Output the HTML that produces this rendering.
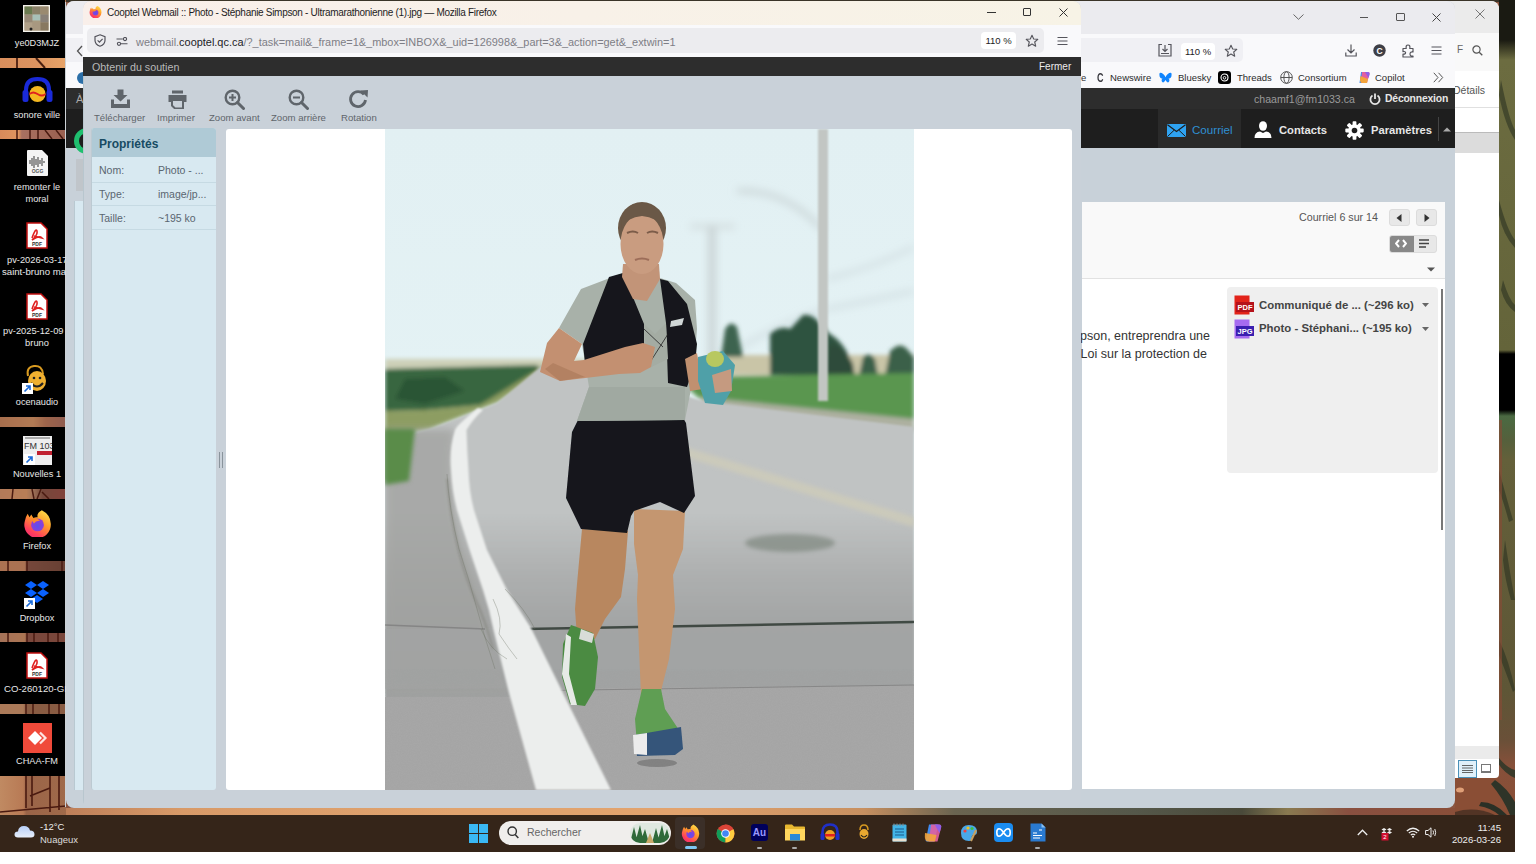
<!DOCTYPE html>
<html><head><meta charset="utf-8">
<style>
*{box-sizing:border-box}
html,body{margin:0;padding:0}
body{width:1536px;height:864px;background:#fff;position:relative;overflow:hidden;font-family:"Liberation Sans",sans-serif}
.a{position:absolute}
#screen{position:absolute;left:0;top:0;width:1515px;height:852px;overflow:hidden;background:#8a5540}
.tile{position:absolute;left:0;width:65px;background:#000}
.dl{position:absolute;left:0;width:74px;text-align:center;color:#e8e8e8;font-size:10px;line-height:12px;white-space:nowrap;overflow:hidden}
.t{position:absolute;white-space:nowrap}
.st{filter:brightness(0.88) saturate(0.9)}
</style></head><body>
<div id="screen">
  <!-- wallpaper -->
  <div class="a" style="left:0;top:0;width:1515px;height:2px;background:#3a3428"></div>
  <div class="a" style="left:0;top:808px;width:1515px;height:7px;background:linear-gradient(90deg,#b07050 0,#d89a68 12%,#e0a36e 30%,#e2a36e 45%,#c89060 57%,#6a6450 63%,#55584a 75%,#4a4a3a 82%,#8a7a50 85%,#8a5040 89%,#8a4e35 100%)"></div>
  <div class="a" style="left:0;top:0;width:66px;height:815px;background:#b07a52"></div>
  <div class="a" style="left:1499px;top:0;width:16px;height:815px;background:linear-gradient(180deg,#1a1a12 0,#1a1a12 40px,#6c6c40 60px,#64643a 350px,#000 354px,#000 410px,#4a6a42 416px,#55603c 440px,#64603a 460px,#5e5636 690px,#6a5038 740px,#86503a 765px,#8a4e35 815px)"></div>
  <svg class="a" style="left:1499px;top:0" width="16" height="815" viewBox="0 0 16 815"><path d="M2 80 Q10 120 16 130 L16 140 Q6 125 0 95Z M0 200 Q8 230 16 240 L16 248 Q4 235 0 215Z M4 280 Q10 300 16 305 L16 312 Q6 305 2 290Z M0 470 Q8 500 14 520 L10 522 Q4 500 0 490Z M6 540 Q12 580 16 600 L12 600 Q6 580 4 560Z M0 640 Q10 660 16 690 L14 692 Q6 670 0 655Z" fill="#2c3222" opacity="0.6"/><rect x="0" y="420" width="3" height="300" fill="#8a4a35" opacity="0.6"/></svg>
  <div class="a" style="left:1455px;top:770px;width:44px;height:45px;background:#8a4e35"></div>
  <svg class="a" style="left:1455px;top:740px" width="60" height="75" viewBox="0 0 60 75"><path d="M40 40 Q52 48 60 62 L60 75 L55 75 Q48 58 36 44 Z" fill="#2e3428"/><path d="M26 62 Q40 62 52 75 L44 75 Q36 68 24 66 Z" fill="#2a3026"/><path d="M44 18 Q52 28 60 30 L60 38 Q50 34 42 22 Z" fill="#3a3a2a"/><ellipse cx="5" cy="50" rx="4" ry="2.5" fill="#e0a078"/><path d="M0 72 Q20 66 40 75 L0 75Z" fill="#3a2a20" opacity="0.7"/></svg>
  <!-- desktop tiles -->
  <div class="a" style="left:0;top:58px;width:66px;height:10px;background:linear-gradient(90deg,#d98e5c 0,#dc9460 55%,#e8a468 100%)"></div>
  <div class="a" style="left:16px;top:58px;width:2px;height:10px;background:#5a2a18"></div>
  <svg class="a" style="left:0;top:58px" width="66" height="10"><path d="M36 0L45 10" stroke="#4a2010" stroke-width="2"/></svg>
  <div class="a" style="left:0;top:130px;width:66px;height:9px;background:linear-gradient(90deg,#d88a5a 0,#e0955f 28%,#a87060 33%,#9a6050 100%)"></div>
  <svg class="a" style="left:0;top:130px" width="66" height="9"><path d="M17 0V9M30 0V9M38 0V9M45 0L52 9M56 0L63 9" stroke="#4a1a10" stroke-width="1.5"/></svg>
  <div class="a st" style="left:0;top:417px;width:66px;height:10px;background:linear-gradient(90deg,#c47c52 0,#d08a5a 50%,#b87050 70%,#a86858 100%)"></div>
  <div class="a st" style="left:0;top:489px;width:66px;height:10px;background:linear-gradient(90deg,#d08a60 0,#d88e5c 40%,#b88060 50%,#8a5040 65%,#9a4a40 100%)"></div>
  <svg class="a" style="left:0;top:489px" width="66" height="10"><path d="M13 0L12 10M32 0L34 10M41 0L37 10M42 3L49 10" stroke="#4a1a10" stroke-width="1.5"/></svg>
  <div class="a st" style="left:0;top:561px;width:66px;height:10px;background:linear-gradient(90deg,#c88058 0,#c88058 37%,#8a5040 42%,#7a4838 100%)"></div>
  <svg class="a" style="left:0;top:561px" width="66" height="10"><path d="M8 0V10M27 0V10M62 0V10" stroke="#4a1a10" stroke-width="1.5"/></svg>
  <div class="a st" style="left:0;top:633px;width:66px;height:9px;background:linear-gradient(90deg,#c08060 0,#c88458 37%,#905040 42%,#905040 100%)"></div>
  <svg class="a" style="left:0;top:633px" width="66" height="9"><path d="M8 0V9M27 0V9M34 0V9M48 0V9M58 0V9" stroke="#4a1a10" stroke-width="1.5"/></svg>
  <div class="a st" style="left:0;top:704px;width:66px;height:10px;background:linear-gradient(90deg,#c88a60 0,#c88a60 35%,#a06848 40%,#a06848 100%)"></div>
  <svg class="a" style="left:0;top:704px" width="66" height="10"><path d="M26 0V10M33 0V10M49 0V10M59 0V10" stroke="#4a1a10" stroke-width="1.5"/></svg>
  <div class="a" style="left:0;top:776px;width:66px;height:39px;background:linear-gradient(90deg,#c08a62 0,#b87a55 35%,#9a6448 40%,#a06a4a 100%)"></div>
  <svg class="a" style="left:0;top:776px" width="66" height="39"><path d="M26 0V32M32 0V30M50 0V36M59 0V34M30 20L50 12M0 36L66 30" stroke="#4a1a10" stroke-width="1.6" fill="none"/></svg>
  <div class="tile" style="top:0;height:58px"></div>
  <div class="tile" style="top:68px;height:62px"></div>
  <div class="tile" style="top:139px;height:278px"></div>
  <div class="tile" style="top:427px;height:62px"></div>
  <div class="tile" style="top:499px;height:62px"></div>
  <div class="tile" style="top:571px;height:62px"></div>
  <div class="tile" style="top:642px;height:62px"></div>
  <div class="tile" style="top:714px;height:62px"></div>
  <div class="a" style="left:65px;top:2px;width:1px;height:805px;background:#cdd2d6"></div>

  <!-- desktop icons -->
  <svg class="a" style="left:23px;top:5px" width="27" height="27" viewBox="0 0 27 27"><rect width="27" height="27" fill="#f4f2ec"/><rect x="1.5" y="1.5" width="24" height="24" fill="#a89a80"/><rect x="1.5" y="1.5" width="8" height="8" fill="#6a7a50"/><rect x="9.5" y="1.5" width="8" height="8" fill="#8a8068"/><rect x="17.5" y="1.5" width="8" height="8" fill="#9a8a70"/><rect x="1.5" y="9.5" width="8" height="8" fill="#988a78"/><rect x="9.5" y="9.5" width="8" height="6" fill="#a8c0b8"/><rect x="17.5" y="9.5" width="8" height="8" fill="#888078"/><rect x="1.5" y="17.5" width="8" height="8" fill="#b0a088"/><rect x="9.5" y="17.5" width="8" height="8" fill="#a89880"/><rect x="17.5" y="17.5" width="8" height="8" fill="#887860"/><circle cx="8" cy="24" r="1.5" fill="#222"/></svg>
  <div class="dl" style="top:37px;font-size:9.2px">ye0D3MJZ</div>
  <svg class="a" style="left:22px;top:77px" width="31" height="27" viewBox="0 0 31 27"><path d="M4 19V13Q4 2 15.5 2Q27 2 27 13V19" fill="none" stroke="#1a2ad8" stroke-width="4"/><rect x="0.5" y="13" width="6" height="12" rx="2.5" fill="#1a2ad8"/><rect x="24.5" y="13" width="6" height="12" rx="2.5" fill="#1a2ad8"/><ellipse cx="15.5" cy="17" rx="8" ry="8" fill="#f5b820"/><path d="M7.5 16Q11 13 15.5 16Q20 19 23.5 16V18Q20 21 15.5 18Q11 15 7.5 18Z" fill="#e02020"/></svg>
  <div class="dl" style="top:109px;font-size:9.2px">sonore ville</div>
  <svg class="a" style="left:26px;top:149px" width="23" height="28" viewBox="0 0 23 28"><path d="M1 2Q1 1 2 1H16L22 7V26Q22 27 21 27H2Q1 27 1 26Z" fill="#f4f4f4"/><path d="M4 11V15M6 9V17M8 7V19M10 10V16M12 8V18M14 11V15M16 9V17M18 12V14" stroke="#555" stroke-width="1.2"/><text x="11.5" y="24" font-size="5" fill="#555" text-anchor="middle" font-family="Liberation Sans" font-weight="bold">OGG</text></svg>
  <div class="dl" style="top:181px;font-size:9.2px">remonter le<br>moral</div>
<svg class="a" style="left:26px;top:222px" width="22" height="27" viewBox="0 0 22 27"><path d="M1 1H15L21 7V26H1Z" fill="#fff" stroke="#c01010" stroke-width="1.5"/><path d="M6 16Q10 5 11 9Q12 13 6 18Q13 13 16 16Q12 15 8 14" fill="none" stroke="#e02020" stroke-width="1.6"/><text x="11" y="23.5" font-size="5" fill="#333" text-anchor="middle" font-family="Liberation Sans" font-weight="bold">PDF</text></svg>
  <div class="dl" style="top:254px;font-size:9.3px;text-align:left;left:7px;width:70px">pv-2026-03-17</div><div class="dl" style="top:266px;font-size:9.6px;text-align:left;left:2px;width:70px">saint-bruno mars</div>
<svg class="a" style="left:26px;top:293px" width="22" height="27" viewBox="0 0 22 27"><path d="M1 1H15L21 7V26H1Z" fill="#fff" stroke="#c01010" stroke-width="1.5"/><path d="M6 16Q10 5 11 9Q12 13 6 18Q13 13 16 16Q12 15 8 14" fill="none" stroke="#e02020" stroke-width="1.6"/><text x="11" y="23.5" font-size="5" fill="#333" text-anchor="middle" font-family="Liberation Sans" font-weight="bold">PDF</text></svg>
  <div class="dl" style="top:325px;font-size:9.3px;text-align:left;left:3px;width:70px">pv-2025-12-09</div><div class="dl" style="top:337px;font-size:9.3px">bruno</div>
  <svg class="a" style="left:20px;top:364px" width="30" height="30" viewBox="0 0 30 30"><path d="M8 12Q6 3 14 2Q22 1 23 10" fill="none" stroke="#d89a20" stroke-width="2"/><ellipse cx="17" cy="17" rx="9" ry="10" fill="#f0b030"/><path d="M11 19Q17 26 23 19" fill="none" stroke="#222" stroke-width="2"/><circle cx="14" cy="14" r="1.3" fill="#222"/><circle cx="20" cy="14" r="1.3" fill="#222"/><rect x="2" y="19" width="11" height="11" fill="#fff"/><path d="M4.5 27.5L10 22M6 22H10V26" fill="none" stroke="#1a6ad8" stroke-width="1.6"/></svg>
  <div class="dl" style="top:396px;font-size:9.2px">ocenaudio</div>
  <svg class="a" style="left:23px;top:436px" width="29" height="29" viewBox="0 0 29 29"><rect width="29" height="29" fill="#eeeeee"/><rect x="2" y="1" width="25" height="2" fill="#aaa"/><text x="1" y="13" font-size="9" fill="#333" font-family="Liberation Sans">FM 103.3</text><rect x="14" y="15" width="15" height="4" fill="#c02030"/><rect x="1" y="18" width="11" height="11" fill="#fff"/><path d="M3.5 26.5L9 21M5 21H9V25" fill="none" stroke="#1a6ad8" stroke-width="1.6"/></svg>
  <div class="dl" style="top:468px;font-size:9.2px">Nouvelles 1</div>
  <svg class="a" style="left:23px;top:508px" width="29" height="29" viewBox="0 0 28 28"><defs><linearGradient id="ffod" x1="0.8" y1="0" x2="0.2" y2="1"><stop offset="0" stop-color="#ffe04a"/><stop offset="0.4" stop-color="#ff9a2a"/><stop offset="0.8" stop-color="#ff3d5e"/><stop offset="1" stop-color="#f2306e"/></linearGradient><radialGradient id="ffpd" cx="0.5" cy="0.6" r="0.6"><stop offset="0" stop-color="#5b4ff0"/><stop offset="1" stop-color="#9a3ad0"/></radialGradient></defs><path d="M4.5 5.5 L6.3 9 L8 6.3 L10 9.6 Q12 8.6 14.2 9 Q12.8 5 18.2 2.2 Q26.5 6.5 26.8 15 A12.8 12.8 0 1 1 1.8 12.5 Q2.5 8.5 4.5 5.5 Z" fill="url(#ffod)"/><circle cx="14" cy="16.3" r="6.2" fill="url(#ffpd)"/><path d="M7.8 10.5 Q13 8.2 16.5 12.5 Q12.5 12 10.5 15 Q9 12.5 7.8 10.5 Z" fill="#ff8a2a"/></svg>
  <div class="dl" style="top:540px;font-size:9.2px">Firefox</div>
  <svg class="a" style="left:23px;top:580px" width="29" height="29" viewBox="0 0 29 29"><g fill="#0a62ff"><path d="M8 1L14 5L8 9L2 5Z"/><path d="M20 1L26 5L20 9L14 5Z"/><path d="M8 9L14 13L8 17L2 13Z"/><path d="M20 9L26 13L20 17L14 13Z"/><path d="M14 15L20 19L14 23L8 19Z"/></g><rect x="1" y="18" width="11" height="11" fill="#fff"/><path d="M3.5 26.5L9 21M5 21H9V25" fill="none" stroke="#1a6ad8" stroke-width="1.6"/></svg>
  <div class="dl" style="top:612px;font-size:9.2px">Dropbox</div>
<svg class="a" style="left:26px;top:652px" width="22" height="27" viewBox="0 0 22 27"><path d="M1 1H15L21 7V26H1Z" fill="#fff" stroke="#c01010" stroke-width="1.5"/><path d="M6 16Q10 5 11 9Q12 13 6 18Q13 13 16 16Q12 15 8 14" fill="none" stroke="#e02020" stroke-width="1.6"/><text x="11" y="23.5" font-size="5" fill="#333" text-anchor="middle" font-family="Liberation Sans" font-weight="bold">PDF</text></svg>
  <div class="dl" style="top:683px;font-size:9.6px;text-align:left;left:4px;width:70px">CO-260120-GI..</div>
  <div class="a" style="left:23px;top:723px;width:29px;height:30px;background:#f04a3a"></div>
  <svg class="a" style="left:27px;top:730px" width="22" height="16" viewBox="0 0 22 16"><path d="M8 1L15 8L8 15L1 8Z" fill="#fff"/><path d="M13 2.5L18.5 8L13 13.5" fill="none" stroke="#fff" stroke-width="2.2" opacity="0.85"/></svg>
  <div class="dl" style="top:755px;font-size:9.2px">CHAA-FM</div>

  <!-- right background window -->
  <div class="a" style="left:1380px;top:1px;width:119px;height:777px;background:#fff;border-radius:8px 8px 4px 4px;overflow:hidden">
    <div class="a" style="left:0;top:0;width:119px;height:32px;background:#ebebeb"></div>
    <div class="a" style="left:0;top:32px;width:119px;height:38px;background:#f9f9f9"></div>
    <div class="a" style="left:0;top:106px;width:119px;height:1px;background:#e0e0e0"></div>
    <div class="a" style="left:0;top:131px;width:119px;height:21px;background:#dcdcdc;border-top:1px solid #bbb"></div>
    <div class="a" style="left:0;top:745px;width:119px;height:13px;background:#ebebeb"></div>
    <svg class="a" style="left:95px;top:8px" width="10" height="10" viewBox="0 0 10 10"><path d="M0.5 0.5L9.5 9.5M9.5 0.5L0.5 9.5" stroke="#777" stroke-width="1"/></svg>
    <div class="t" style="left:77px;top:43px;font-size:10px;line-height:12px;color:#666">F</div>
    <svg class="a" style="left:92px;top:44px" width="11" height="11" viewBox="0 0 11 11"><circle cx="4.5" cy="4.5" r="3.6" fill="none" stroke="#555" stroke-width="1.2"/><path d="M7.2 7.2L10.3 10.3" stroke="#555" stroke-width="1.3"/></svg>
    <div class="t" style="left:73px;top:83px;font-size:10.5px;line-height:12px;color:#555">Détails</div>
    <div class="a" style="left:78px;top:759px;width:19px;height:18px;background:#e0f0fa;border:1px solid #4a90b8"></div>
    <svg class="a" style="left:82px;top:764px" width="11" height="8" viewBox="0 0 11 8"><path d="M0 0.5H11M0 3H11M0 5.5H11M0 7.5H11" stroke="#555" stroke-width="0.9"/></svg>
    <div class="a" style="left:101px;top:763px;width:10px;height:9px;border:1px solid #777;border-bottom-width:2px"></div>

  </div>
  <!-- main window -->
  <div id="main" class="a" style="left:66px;top:1px;width:1389px;height:807px;background:#c8d1d9;border-radius:8px;overflow:hidden">
    <div class="a" style="left:0;top:0;width:1389px;height:33px;background:#ebebef"></div>
    <div class="a" style="left:0;top:33px;width:1389px;height:54px;background:#f9f9fb"></div>
    <div class="a" style="left:0;top:87px;width:1389px;height:21px;background:#2d2d2d"></div>
    <div class="a" style="left:0;top:108px;width:1389px;height:39px;background:#1e1e1e"></div>
    <div class="a" style="left:1092px;top:108px;width:83px;height:39px;background:#2a2a2a"></div>
    <div class="a" style="left:8px;top:200px;width:9px;height:589px;background:#d8e9f1;border-left:1px solid #b9c9d1"></div>
    <div class="a" style="left:1016px;top:201px;width:363px;height:77px;background:#f9f9f9;border-bottom:1px solid #e2e2e2"></div>
    <div class="a" style="left:1016px;top:278px;width:363px;height:510px;background:#fff"></div>

    <!-- main title bar controls -->
    <svg class="a" style="left:1227px;top:13px" width="11" height="6" viewBox="0 0 11 6"><path d="M0.5 0.5L5.5 5.3L10.5 0.5" fill="none" stroke="#666" stroke-width="1"/></svg>
    <div class="a" style="left:1294px;top:16px;width:8px;height:1px;background:#555"></div>
    <div class="a" style="left:1330px;top:12px;width:9px;height:8px;border:1px solid #555;border-radius:1px"></div>
    <svg class="a" style="left:1366px;top:12px" width="9" height="9" viewBox="0 0 9 9"><path d="M0.5 0.5L8.5 8.5M8.5 0.5L0.5 8.5" stroke="#444" stroke-width="1"/></svg>
    <!-- nav toolbar -->
    <div class="a" style="left:-10px;top:37px;width:1187px;height:24px;background:#f0f0f4;border-radius:5px"></div>
    <svg class="a" style="left:1092px;top:43px" width="14" height="13" viewBox="0 0 14 13"><path d="M1 4V12H13V4" fill="none" stroke="#55555c" stroke-width="1.2"/><path d="M4 0.5H1V4M10 0.5H13V4" fill="none" stroke="#55555c" stroke-width="1.2"/><path d="M7 1V7.5M4.5 5L7 7.5L9.5 5M3 9.5H11" fill="none" stroke="#55555c" stroke-width="1.2"/></svg>
    <div class="a" style="left:1115px;top:42px;width:34px;height:17px;background:#fff;border-radius:4px"></div>
    <div class="t" style="left:1115px;top:44px;width:34px;text-align:center;font-size:9.5px;line-height:13px;color:#222">110 %</div>
    <svg class="a" style="left:1158px;top:43px" width="14" height="14" viewBox="0 0 14 14"><path d="M7 1.2 L8.7 5 L12.8 5.3 L9.7 8 L10.7 12.2 L7 10 L3.3 12.2 L4.3 8 L1.2 5.3 L5.3 5 Z" fill="none" stroke="#55555c" stroke-width="1.1" stroke-linejoin="round"/></svg>
    <svg class="a" style="left:1279px;top:43px" width="12" height="13" viewBox="0 0 12 13"><path d="M6 0.5V9M2.5 5.5L6 9L9.5 5.5M0.8 8.5V12H11.2V8.5" fill="none" stroke="#55555c" stroke-width="1.2"/></svg>
    <svg class="a" style="left:1307px;top:43px" width="13" height="13" viewBox="0 0 13 13"><circle cx="6.5" cy="6.5" r="6.2" fill="#3f3f46"/><text x="6.5" y="9.6" font-size="8.5" font-weight="bold" fill="#fff" text-anchor="middle" font-family="Liberation Sans">C</text></svg>
    <svg class="a" style="left:1336px;top:43px" width="12" height="14" viewBox="0 0 12 14"><path d="M1 4.5H4.2Q3.6 1 6 1Q8.4 1 7.8 4.5H11V8Q8 7.6 8 10Q8 12.4 11 12V13H1V10Q3.6 10.4 3.6 8.8Q3.6 7.2 1 7.6Z" fill="none" stroke="#55555c" stroke-width="1.2" stroke-linejoin="round"/></svg>
    <svg class="a" style="left:1365px;top:45px" width="11" height="10" viewBox="0 0 11 10"><path d="M0.5 1H10.5M0.5 4.5H10.5M0.5 8H10.5" stroke="#55555c" stroke-width="1.1"/></svg>
    <!-- bookmarks -->
    <div class="t" style="left:1015px;top:71px;font-size:9.5px;line-height:12px;color:#333">e</div>
    <div class="t" style="left:1031px;top:70px;font-size:12px;line-height:14px;color:#3a3a40;font-weight:bold;transform:scaleX(0.75);transform-origin:0 0">C</div>
    <div class="t" style="left:1044px;top:71px;font-size:9.5px;line-height:12px;color:#2b2b2b">Newswire</div>
    <svg class="a" style="left:1093px;top:71px" width="13" height="12" viewBox="0 0 13 12"><path d="M6.5 5.2Q4.5 1 1.2 0.8Q0 0.8 0.6 4.5Q1.2 7 4 6.6Q1.8 7.5 3 9.8Q4.6 11.8 6.5 8Q8.4 11.8 10 9.8Q11.2 7.5 9 6.6Q11.8 7 12.4 4.5Q13 0.8 11.8 0.8Q8.5 1 6.5 5.2Z" fill="#1185fe"/></svg>
    <div class="t" style="left:1112px;top:71px;font-size:9.5px;line-height:12px;color:#2b2b2b">Bluesky</div>
    <div class="a" style="left:1152px;top:70px;width:13px;height:13px;background:#000;border-radius:3px"></div>
    <svg class="a" style="left:1152px;top:70px" width="13" height="13" viewBox="0 0 13 13"><circle cx="6.5" cy="6.5" r="3.5" fill="none" stroke="#fff" stroke-width="1.1"/><circle cx="6.5" cy="6.8" r="1.3" fill="none" stroke="#fff" stroke-width="0.9"/></svg>
    <div class="t" style="left:1171px;top:71px;font-size:9.5px;line-height:12px;color:#2b2b2b">Threads</div>
    <svg class="a" style="left:1214px;top:70px" width="13" height="13" viewBox="0 0 13 13"><circle cx="6.5" cy="6.5" r="5.8" fill="none" stroke="#555" stroke-width="1"/><ellipse cx="6.5" cy="6.5" rx="2.6" ry="5.8" fill="none" stroke="#555" stroke-width="1"/><path d="M0.7 6.5H12.3" stroke="#555" stroke-width="1"/></svg>
    <div class="t" style="left:1232px;top:71px;font-size:9.5px;line-height:12px;color:#2b2b2b">Consortium</div>
    <svg class="a" style="left:1292px;top:70px" width="13" height="13" viewBox="0 0 13 13"><path d="M3 1H9L6 12H1.5Z" fill="#3f8cf2"/><path d="M4 1H10Q12 1 11.5 3L9 12H3Z" fill="#e25fa0"/><path d="M2.5 5Q1 12 4 12H9L10 8Z" fill="#f3a43b"/><path d="M7 1H10Q12 1 11.5 3.5L10.5 7Z" fill="#8f5ee8"/></svg>
    <div class="t" style="left:1309px;top:71px;font-size:9.5px;line-height:12px;color:#2b2b2b">Copilot</div>
    <svg class="a" style="left:1367px;top:71px" width="11" height="11" viewBox="0 0 11 11"><path d="M0.8 0.8L5 5.5L0.8 10.2M5.5 0.8L9.7 5.5L5.5 10.2" fill="none" stroke="#555" stroke-width="1"/></svg>
    <!-- dark top bar -->
    <div class="t" style="left:1188px;top:92px;font-size:10.6px;line-height:12px;color:#9a9a9a">chaamf1@fm1033.ca</div>
    <svg class="a" style="left:1303px;top:92px" width="12" height="12" viewBox="0 0 12 12"><path d="M3.5 2.6A4.6 4.6 0 1 0 8.5 2.6" fill="none" stroke="#e6e6e6" stroke-width="1.8"/><path d="M6 0.5V6" stroke="#e6e6e6" stroke-width="1.8"/></svg>
    <div class="t" style="left:1319px;top:92px;font-size:10.4px;line-height:12px;color:#e6e6e6;font-weight:bold;letter-spacing:-0.2px">Déconnexion</div>
    <!-- nav -->
    <svg class="a" style="left:1101px;top:123px" width="19" height="13" viewBox="0 0 19 13"><rect x="0" y="0" width="19" height="13" rx="1" fill="#2ea3f2"/><path d="M0.5 0.8L9.5 7.5L18.5 0.8" fill="none" stroke="#1e1e1e" stroke-width="1.3"/><path d="M0.5 12.5L7 6.3M18.5 12.5L12 6.3" stroke="#1e1e1e" stroke-width="1"/></svg>
    <div class="t" style="left:1126px;top:122px;font-size:11.6px;line-height:14px;color:#2f8fd2">Courriel</div>
    <svg class="a" style="left:1188px;top:120px" width="18" height="17" viewBox="0 0 18 17"><ellipse cx="9" cy="5" rx="4" ry="4.8" fill="#fff"/><path d="M0.5 17Q0.5 11 6 10.5L9 12L12 10.5Q17.5 11 17.5 17Z" fill="#fff"/></svg>
    <div class="t" style="left:1213px;top:122px;font-size:11.2px;line-height:14px;color:#e6e6e6;font-weight:bold">Contacts</div>
    <svg class="a" style="left:1279px;top:120px" width="19" height="19" viewBox="0 0 19 19"><g fill="#fff"><circle cx="9.5" cy="9.5" r="6.2"/><rect x="7.6" y="0.3" width="3.8" height="18.4" rx="0.8"/><rect x="7.6" y="0.3" width="3.8" height="18.4" rx="0.8" transform="rotate(45 9.5 9.5)"/><rect x="7.6" y="0.3" width="3.8" height="18.4" rx="0.8" transform="rotate(90 9.5 9.5)"/><rect x="7.6" y="0.3" width="3.8" height="18.4" rx="0.8" transform="rotate(135 9.5 9.5)"/></g><circle cx="9.5" cy="9.5" r="2.8" fill="#1e1e1e"/></svg>
    <div class="t" style="left:1305px;top:122px;font-size:11.2px;line-height:14px;color:#e6e6e6;font-weight:bold">Paramètres</div>
    <div class="a" style="left:1372px;top:116px;width:1px;height:24px;background:#444"></div>
    <svg class="a" style="left:1377px;top:126px" width="8" height="5" viewBox="0 0 8 5"><path d="M0 4.5L4 0.5L8 4.5Z" fill="#aaa"/></svg>
    <!-- left strip -->
    <svg class="a" style="left:10px;top:44px" width="8" height="12" viewBox="0 0 8 12"><path d="M6 1L1.5 6L6 11" fill="none" stroke="#555" stroke-width="1.3"/></svg>
    <div class="a" style="left:11px;top:71px;width:12px;height:12px;border-radius:50%;background:#2b6fa8"></div>
    <div class="t" style="left:10px;top:92px;font-size:11px;line-height:13px;color:#aaa">À</div>
    <div class="a" style="left:8px;top:127px;width:26px;height:26px;border-radius:50%;border:5px solid #1fbf6f"></div>
    <div class="a" style="left:10px;top:158px;width:7px;height:32px;background:#c0c5ca"></div>
    <!-- message header -->
    <div class="t" style="left:1233px;top:210px;font-size:10.7px;line-height:13px;color:#555">Courriel 6 sur 14</div>
    <div class="a" style="left:1323px;top:208px;width:21px;height:17px;background:#e8e8e8;border:1px solid #dcdcdc;border-radius:3px"></div>
    <svg class="a" style="left:1330px;top:213px" width="6" height="8" viewBox="0 0 6 8"><path d="M5.5 0L0.5 4L5.5 8Z" fill="#333"/></svg>
    <div class="a" style="left:1350px;top:208px;width:21px;height:17px;background:#e8e8e8;border:1px solid #dcdcdc;border-radius:3px"></div>
    <svg class="a" style="left:1358px;top:213px" width="6" height="8" viewBox="0 0 6 8"><path d="M0.5 0L5.5 4L0.5 8Z" fill="#333"/></svg>
    <div class="a" style="left:1323px;top:234px;width:48px;height:18px;background:#e8e8e8;border:1px solid #dcdcdc;border-radius:3px;overflow:hidden"><div class="a" style="left:0;top:0;width:24px;height:18px;background:#888"></div></div>
    <svg class="a" style="left:1329px;top:238px" width="12" height="9" viewBox="0 0 12 9"><path d="M4 1L1 4.5L4 8M8 1L11 4.5L8 8" fill="none" stroke="#fff" stroke-width="2"/></svg>
    <svg class="a" style="left:1353px;top:238px" width="10" height="9" viewBox="0 0 10 9"><path d="M0 1H10M0 4.5H10M0 8H7" stroke="#444" stroke-width="1.4"/></svg>
    <svg class="a" style="left:1361px;top:266px" width="8" height="5" viewBox="0 0 8 5"><path d="M0 0.5L4 4.5L8 0.5Z" fill="#555"/></svg>
    <!-- body text -->
    <div class="t" style="left:844px;top:326px;width:300px;text-align:right;font-size:12.5px;line-height:18px;color:#333">Simpson, entreprendra une</div>
    <div class="t" style="left:841px;top:344px;width:300px;text-align:right;font-size:12.5px;line-height:18px;color:#333">de la Loi sur la protection de</div>
    <!-- attachments -->
    <div class="a" style="left:1161px;top:286px;width:211px;height:186px;background:#efefef;border-radius:4px"></div>
    <div class="a" style="left:1375px;top:288px;width:2px;height:241px;background:#777"></div>
    <svg class="a" style="left:1168px;top:294px" width="20" height="20" viewBox="0 0 20 20"><rect x="0.5" y="0.5" width="15" height="19" fill="#e2231a"/><rect x="2" y="7" width="18" height="10" fill="#b5121b"/><text x="11" y="15" font-size="7.5" font-weight="bold" fill="#fff" text-anchor="middle" font-family="Liberation Sans">PDF</text></svg>
    <div class="t" style="left:1193px;top:297px;font-size:11.4px;line-height:14px;color:#444;font-weight:bold">Communiqué de ... (~296 ko)</div>
    <svg class="a" style="left:1356px;top:302px" width="7" height="4" viewBox="0 0 7 4"><path d="M0 0L3.5 4L7 0Z" fill="#666"/></svg>
    <svg class="a" style="left:1168px;top:318px" width="20" height="20" viewBox="0 0 20 20"><rect x="0.5" y="0.5" width="15" height="19" fill="#a66cf0"/><rect x="2" y="7" width="18" height="10" fill="#3a1fb0"/><text x="11" y="15" font-size="7.5" font-weight="bold" fill="#fff" text-anchor="middle" font-family="Liberation Sans">JPG</text></svg>
    <div class="t" style="left:1193px;top:320px;font-size:11.4px;line-height:14px;color:#444;font-weight:bold">Photo - Stéphani... (~195 ko)</div>
    <svg class="a" style="left:1356px;top:326px" width="7" height="4" viewBox="0 0 7 4"><path d="M0 0L3.5 4L7 0Z" fill="#666"/></svg>
  </div>
  <!-- popup window -->
  <div id="pop" class="a" style="left:83px;top:1px;width:998px;height:807px;background:#c9d1d9;border-radius:8px;overflow:hidden">
    <div class="a" style="left:0;top:0;width:998px;height:24px;background:linear-gradient(90deg,#f9efea,#f7f3e6)"></div>
    <div class="a" style="left:0;top:75px;width:1px;height:732px;background:#b8c6ce"></div>
    <div class="a" style="left:0;top:24px;width:998px;height:32px;background:#f9f9fb"></div>
    <div class="a" style="left:4px;top:27px;width:957px;height:25px;background:#ececef;border-radius:5px"></div>
    <div class="a" style="left:0;top:56px;width:998px;height:19px;background:#2d2d2d"></div>
    <!-- popup title -->
    <svg class="a" style="left:6px;top:4px" width="13" height="13" viewBox="0 0 28 28"><defs><linearGradient id="ffop" x1="0.8" y1="0" x2="0.2" y2="1"><stop offset="0" stop-color="#ffe04a"/><stop offset="0.4" stop-color="#ff9a2a"/><stop offset="0.8" stop-color="#ff3d5e"/><stop offset="1" stop-color="#f2306e"/></linearGradient><radialGradient id="ffpp" cx="0.5" cy="0.6" r="0.6"><stop offset="0" stop-color="#5b4ff0"/><stop offset="1" stop-color="#9a3ad0"/></radialGradient></defs><path d="M4.5 5.5 L6.3 9 L8 6.3 L10 9.6 Q12 8.6 14.2 9 Q12.8 5 18.2 2.2 Q26.5 6.5 26.8 15 A12.8 12.8 0 1 1 1.8 12.5 Q2.5 8.5 4.5 5.5 Z" fill="url(#ffop)"/><circle cx="14" cy="16.3" r="6.2" fill="url(#ffpp)"/><path d="M7.8 10.5 Q13 8.2 16.5 12.5 Q12.5 12 10.5 15 Q9 12.5 7.8 10.5 Z" fill="#ff8a2a"/></svg>
    <div class="t" style="left:24px;top:5px;font-size:10px;line-height:13px;letter-spacing:-0.3px;color:#1d1d1d">Cooptel Webmail :: Photo - Stéphanie Simpson - Ultramarathonienne (1).jpg — Mozilla Firefox</div>
    <div class="a" style="left:904px;top:11px;width:9px;height:1px;background:#333"></div>
    <div class="a" style="left:940px;top:7px;width:8px;height:8px;border:1px solid #333;border-radius:1px"></div>
    <svg class="a" style="left:976px;top:7px" width="9" height="9" viewBox="0 0 9 9"><path d="M0.5 0.5L8.5 8.5M8.5 0.5L0.5 8.5" stroke="#333" stroke-width="1"/></svg>
    <!-- url bar -->
    <svg class="a" style="left:11px;top:33px" width="12" height="13" viewBox="0 0 12 13"><path d="M6 0.8 L11 2.6 V6.2 Q11 10.5 6 12.2 Q1 10.5 1 6.2 V2.6 Z" fill="none" stroke="#52525a" stroke-width="1.2"/><path d="M3.6 6.4 L5.4 8.1 L8.6 4.8" fill="none" stroke="#52525a" stroke-width="1.2"/></svg>
    <svg class="a" style="left:33px;top:36px" width="12" height="9" viewBox="0 0 12 9"><circle cx="9" cy="2" r="1.6" fill="none" stroke="#52525a" stroke-width="1.1"/><circle cx="3" cy="6.8" r="1.6" fill="none" stroke="#52525a" stroke-width="1.1"/><path d="M0.5 2H6.8 M5 6.8H11.5" stroke="#52525a" stroke-width="1.1"/></svg>
    <div class="t" style="left:53px;top:34px;font-size:10.93px;line-height:14px;color:#7e7e86">webmail.<span style="color:#1b1b1f">cooptel.qc.ca</span>/?_task=mail&amp;_frame=1&amp;_mbox=INBOX&amp;_uid=126998&amp;_part=3&amp;_action=get&amp;_extwin=1</div>
    <div class="a" style="left:898px;top:31px;width:35px;height:17px;background:#fff;border-radius:4px"></div>
    <div class="t" style="left:898px;top:33px;width:35px;text-align:center;font-size:9.5px;line-height:13px;color:#222">110 %</div>
    <svg class="a" style="left:942px;top:33px" width="14" height="14" viewBox="0 0 14 14"><path d="M7 1.2 L8.7 5 L12.8 5.3 L9.7 8 L10.7 12.2 L7 10 L3.3 12.2 L4.3 8 L1.2 5.3 L5.3 5 Z" fill="none" stroke="#55555c" stroke-width="1.1" stroke-linejoin="round"/></svg>
    <svg class="a" style="left:974px;top:35px" width="11" height="10" viewBox="0 0 11 10"><path d="M0.5 1.5H10.5M0.5 5H10.5M0.5 8.5H10.5" stroke="#55555c" stroke-width="1.1"/></svg>
    <!-- dark bar -->
    <div class="t" style="left:9px;top:60px;font-size:10.7px;line-height:12px;color:#b9b9b9">Obtenir du soutien</div>
    <div class="t" style="left:956px;top:60px;font-size:10px;line-height:12px;color:#ececec">Fermer</div>
    <!-- toolbar -->
    <svg class="a" style="left:27px;top:88px" width="21" height="20" viewBox="0 0 21 20"><path d="M7.5 0.5H13.5V6H17.5L10.5 12.5L3.5 6H7.5Z" fill="#5f656b"/><path d="M1 10.5H4V15H17V10.5H20V19H1Z" fill="#5f656b"/><rect x="5" y="15.5" width="11" height="2" fill="#5f656b"/></svg>
    <svg class="a" style="left:85px;top:89px" width="19" height="19" viewBox="0 0 19 19"><rect x="4" y="0.5" width="11" height="3" fill="#5f656b"/><path d="M0.5 5H18.5V12H15.5V9H3.5V12H0.5Z" fill="#5f656b"/><path d="M4 10H15V18.5H7L4 15.5Z" fill="none" stroke="#5f656b" stroke-width="2"/></svg>
    <svg class="a" style="left:141px;top:88px" width="21" height="21" viewBox="0 0 21 21"><circle cx="8.5" cy="8.5" r="6.8" fill="none" stroke="#5f656b" stroke-width="2.4"/><path d="M13.5 13.5L19.5 19.5" stroke="#5f656b" stroke-width="3" stroke-linecap="round"/><path d="M5 8.5H12M8.5 5V12" stroke="#5f656b" stroke-width="2"/></svg>
    <svg class="a" style="left:205px;top:88px" width="21" height="21" viewBox="0 0 21 21"><circle cx="8.5" cy="8.5" r="6.8" fill="none" stroke="#5f656b" stroke-width="2.4"/><path d="M13.5 13.5L19.5 19.5" stroke="#5f656b" stroke-width="3" stroke-linecap="round"/><path d="M5 8.5H12" stroke="#5f656b" stroke-width="2"/></svg>
    <svg class="a" style="left:265px;top:88px" width="21" height="20" viewBox="0 0 21 20"><path d="M16 5.5 A7.5 7.5 0 1 0 17.5 11" fill="none" stroke="#5f656b" stroke-width="2.8"/><path d="M12.5 1.5 L20 1 L19.5 8.5 Z" fill="#5f656b"/></svg>
    <div class="t" style="left:11px;top:111px;font-size:9.6px;line-height:12px;color:#5f656b">Télécharger</div>
    <div class="t" style="left:74px;top:111px;font-size:9.6px;line-height:12px;color:#5f656b">Imprimer</div>
    <div class="t" style="left:126px;top:111px;font-size:9.6px;line-height:12px;color:#5f656b">Zoom avant</div>
    <div class="t" style="left:188px;top:111px;font-size:9.6px;line-height:12px;color:#5f656b">Zoom arrière</div>
    <div class="t" style="left:258px;top:111px;font-size:9.6px;line-height:12px;color:#5f656b">Rotation</div>

    <div class="a" style="left:8px;top:127px;width:125px;height:662px;background:#d8e9f1;border-radius:3px;overflow:hidden;border-left:1px solid #bccad2">
      <div class="a" style="left:0;top:0;width:124px;height:29px;background:#afcad6"></div>
      <div class="t" style="left:7px;top:9px;font-size:12px;line-height:14px;font-weight:bold;color:#174b63">Propriétés</div>
      <div class="a" style="left:0;top:54px;width:124px;height:1px;background:#c6dae3"></div>
      <div class="a" style="left:0;top:77px;width:124px;height:1px;background:#c6dae3"></div>
      <div class="a" style="left:0;top:101px;width:124px;height:1px;background:#c6dae3"></div>
      <div class="t" style="left:7px;top:36px;font-size:10.5px;line-height:12px;color:#5a6670">Nom:</div>
      <div class="t" style="left:66px;top:36px;font-size:10.5px;line-height:12px;color:#5a6670">Photo - ...</div>
      <div class="t" style="left:7px;top:60px;font-size:10.5px;line-height:12px;color:#5a6670">Type:</div>
      <div class="t" style="left:66px;top:60px;font-size:10.5px;line-height:12px;color:#5a6670">image/jp...</div>
      <div class="t" style="left:7px;top:84px;font-size:10.5px;line-height:12px;color:#5a6670">Taille:</div>
      <div class="t" style="left:66px;top:84px;font-size:10.5px;line-height:12px;color:#5a6670">~195 ko</div>

    </div>
    <div class="a" style="left:143px;top:128px;width:846px;height:661px;background:#fff;border-radius:3px"></div>
    <div class="a" style="left:136px;top:451px;width:1px;height:16px;background:#8a949c"></div><div class="a" style="left:139px;top:451px;width:1px;height:16px;background:#8a949c"></div>
    <div id="photo" class="a" style="left:302px;top:128px;width:529px;height:661px;overflow:hidden"><svg width="529" height="661" viewBox="0 0 529 661" style="position:absolute;left:0;top:0">
<defs>
<linearGradient id="sky" x1="0" y1="0" x2="0" y2="1"><stop offset="0" stop-color="#e2f0f3"/><stop offset="0.6" stop-color="#e5f3f5"/><stop offset="1" stop-color="#e9f0f0"/></linearGradient>
<linearGradient id="road" x1="0" y1="0" x2="0" y2="1"><stop offset="0.35" stop-color="#c0c3c3"/><stop offset="0.5" stop-color="#adafaf"/><stop offset="0.62" stop-color="#a2a4a4"/><stop offset="0.75" stop-color="#9fa1a1"/><stop offset="1" stop-color="#a6a7a7"/></linearGradient>
<filter id="grain" x="0" y="0" width="100%" height="100%"><feTurbulence type="fractalNoise" baseFrequency="0.9" numOctaves="2" seed="3"/><feColorMatrix values="0 0 0 0 0.35  0 0 0 0 0.35  0 0 0 0 0.35  0 0 0 1.6 -0.55"/></filter>
<linearGradient id="skin" x1="0" y1="0" x2="1" y2="1"><stop offset="0" stop-color="#c89878"/><stop offset="1" stop-color="#b08060"/></linearGradient>
<filter id="b0" x="-20%" y="-20%" width="140%" height="140%"><feGaussianBlur stdDeviation="0.5"/></filter><filter id="b1" x="-20%" y="-20%" width="140%" height="140%"><feGaussianBlur stdDeviation="0.9"/></filter>
<filter id="b2" x="-20%" y="-20%" width="140%" height="140%"><feGaussianBlur stdDeviation="2.2"/></filter>
<filter id="b3" x="-30%" y="-30%" width="160%" height="160%"><feGaussianBlur stdDeviation="4"/></filter>
</defs>
<rect width="529" height="661" fill="url(#sky)"/>
<g filter="url(#b3)">
<path d="M352 62 Q400 60 437 100" stroke="#c5cfd0" stroke-width="4" fill="none"/>
<rect x="324" y="98" width="6" height="140" fill="#c2cbcc"/><rect x="305" y="96" width="45" height="3" fill="#c8d0d0"/>
<path d="M442 150 Q490 138 529 118 M442 180 Q485 172 529 162 M320 240 Q380 200 440 180" stroke="#c4d0d4" stroke-width="2.5" fill="none"/>
</g>
<g filter="url(#b2)">
<rect x="0" y="230" width="529" height="14" fill="#cdd0b8"/>
<rect x="335" y="226" width="194" height="20" fill="#c9c5a7"/>
<path d="M385 246 L385 205 Q395 196 405 200 L418 186 Q428 184 436 196 L445 205 Q462 215 468 240 L470 247 Z" fill="#2f5340"/>
<path d="M440 250 L445 215 Q460 218 468 235 L470 250 Z" fill="#2e4c3a"/>
<path d="M336 228 L340 200 Q346 190 352 198 L358 228 Z" fill="#3d6450"/>
<path d="M474 247 L478 228 Q484 222 490 230 L493 247 Z" fill="#3a5e48"/>
<path d="M500 247 L505 222 Q515 212 522 220 L529 228 L529 247 Z" fill="#3a6048"/>
<path d="M290 248 L529 244 L529 292 L460 286 L345 274 L315 270 Z" fill="#5a964f"/>
<path d="M315 268 L529 290 L529 302 L318 278 Z" fill="#adb0a0"/>
<path d="M0 240 L152 236 L158 244 L95 276 L40 281 L0 282 Z" fill="#386640"/>
<path d="M20 250 L60 248 L80 262 L40 275 L10 270Z" fill="#2c5534"/>
<path d="M0 282 L40 281 L95 276 L160 236 L172 236 L112 274 L45 300 L0 308 Z" fill="#8d9d62"/>
<path d="M0 303 L28 303 L22 352 L0 352 Z" fill="#5a8c4a"/>
</g>
<path d="M160 234 L192 234 L318 272 L529 298 L529 661 L0 661 L0 352 L22 350 L28 305 L48 299 L112 274 Z" fill="url(#road)" filter="url(#b1)"/>
<!-- road details -->
<path d="M300 318 L529 388 L529 398 L300 328 Z" fill="#d0cdb8" opacity="0.7" filter="url(#b2)"/>
<ellipse cx="405" cy="414" rx="45" ry="9" fill="#707a70" opacity="0.55" filter="url(#b2)"/>
<path d="M0 300 L70 300 Q62 360 80 420 L100 480 L125 565 L0 565Z" fill="#a0a19f" opacity="0.75" filter="url(#b3)"/>
<path d="M0 300 L30 300 L24 352 L0 356 Z" fill="#5a8c4a" filter="url(#b2)"/>
<path d="M0 500 L529 495 L529 558 L0 560 Z" fill="#a3a5a5" opacity="0.6"/>
<path d="M0 568 L125 568 L128 560 L529 556 L529 661 L0 661 Z" fill="#a7a7a7"/>
<rect x="0" y="540" width="529" height="121" filter="url(#grain)" opacity="0.5"/>
<path d="M140 500 L529 493" stroke="#2f3a32" stroke-width="2.6" fill="none" opacity="0.85"/>
<path d="M0 496 L100 500" stroke="#6a6a6a" stroke-width="1.5" fill="none" opacity="0.5"/>
<path d="M130 562 L529 556" stroke="#6a6a6a" stroke-width="1" fill="none" opacity="0.5"/>
<path d="M62 350 Q68 420 90 470 Q100 490 108 520" stroke="#6a6a60" stroke-width="2" fill="none" opacity="0.35" filter="url(#b1)"/>
<!-- pole main -->
<rect x="433" y="0" width="10" height="272" fill="#c2c6c3" filter="url(#b1)"/>
<!-- white line -->
<path d="M93 279 Q72 296 70 301 Q64 320 66 341 Q67 362 72 381 L84.6 421 L98 461 L104 481 L108 499 L124 564 L151 661 L226 661 L178 564 L146 499 L134.6 481 L122 461 L102 421 L89 381 Q84 362 83.5 341 Q82 320 81.5 301 Q88 290 98 281 Z" fill="#eceeed" filter="url(#b1)"/>
<path d="M62 345 Q64 380 74 420 Q84 450 92 480 Q100 510 110 540 M108 470 Q118 490 114 505 Q124 520 132 530 M96 500 Q104 520 122 530 M120 460 Q140 480 150 500" stroke="#6a7060" stroke-width="1" fill="none" opacity="0.35"/>
<!-- woman -->
<g filter="url(#b0)">
<!-- back leg -->
<path d="M197 400 L243 402 L240 440 L236 468 L220 490 L210 510 L192 508 L190 480 L192 455 Z" fill="#b8875f"/>
<!-- back shoe -->
<path d="M186 496 L208 504 L213 528 L210 560 L200 577 L185 575 L177 548 L178 515 Z" fill="#4b8b43"/>
<path d="M181 505 L177 545 L186 576 L192 576 L184 545 L186 508 Z" fill="#e6eae6"/>
<path d="M196 500 L209 505 L207 514 L194 510 Z" fill="#d8dcd8"/>
<!-- front leg -->
<path d="M249 380 L300 382 L298 420 L288 446 L290 480 L284 530 L275 566 L256 566 L254 520 L252 470 L253 446 L249 415 Z" fill="#c4966f"/>
<!-- front shoe -->
<path d="M257 560 L276 560 L280 580 L292 598 L296 610 L252 616 L250 590 Z" fill="#5f9e52"/>
<path d="M250 606 L296 598 L298 620 L290 626 L252 627 Z" fill="#34557a"/>
<path d="M248 606 L262 604 L262 626 L249 625 Z" fill="#ececec"/>
<ellipse cx="272" cy="634" rx="20" ry="4" fill="#5e5e5e" opacity="0.5"/>
<!-- shorts -->
<path d="M194 289 L297 287 L301 294 L310 367 L299 384 L275 373 L249 382 L246 387 L242 404 L196 400 L181 369 L187 303 Z" fill="#15171c"/>
<!-- shirt -->
<path d="M196 160 L238 144 L275 149 L291 154 L310 171 L312 200 L308 250 L300 291 L192 292 L204 258 L197 215 L174 199 Z" fill="#a8b1a9"/>
<path d="M192 292 L204 258 L300 258 L300 291 Z" fill="#a0a9a1"/>
<!-- vest -->
<path d="M224 148 L238 144 L259 195 L259 240 L240 224 L200 234 L198 215 Z" fill="#16171b"/>
<path d="M275 150 L283 152 L302 175 L312 215 L310 235 L302 258 L283 254 L281 194 Z" fill="#16171b"/>
<path d="M259 195 L270 205 L281 194 L283 230 L262 240 Z" fill="#a4aca3"/>
<path d="M259 200 L278 218 M262 238 L283 205" stroke="#222" stroke-width="0.8" fill="none"/>
<path d="M286 192 L299 189 L297 196 L285 198 Z" fill="#d0d6d6"/>
<!-- neck/head -->
<path d="M238 135 L274 135 L275 150 L262 172 L248 170 L237 148 Z" fill="#c29478"/>
<ellipse cx="257" cy="99" rx="24" ry="26" fill="#6a5846"/>
<ellipse cx="257" cy="115" rx="21.5" ry="30" fill="#c99c80"/>
<path d="M236 100 Q236 74 256 74 Q278 74 279 100 Q272 88 257 87 Q242 88 236 100 Z" fill="#6a5846"/>
<path d="M242 104 Q248 101 253 104 M262 104 Q267 101 273 104" stroke="#5a4030" stroke-width="2" fill="none" opacity="0.7"/>
<path d="M250 131 Q257 128 264 131" stroke="#8a5a48" stroke-width="2" fill="none" opacity="0.7"/>
<!-- left arm -->
<path d="M174 199 L197 215 L189 232 L199 231 L240 218 L258 214 L270 218 L266 238 L255 244 L234 245 L175 252 L155 243 L162 214 Z" fill="#c39071"/>
<path d="M160 240 L175 252 L200 248 L168 234 Z" fill="#a87858" opacity="0.6"/>
<!-- bottle & right hand -->
<path d="M300 230 L312 224 L318 260 L305 262 Z" fill="#c09070"/>
<path d="M313 228 L338 222 L350 236 L346 262 L338 276 L320 274 L313 252 Z" fill="#4fa0a8"/>
<ellipse cx="330" cy="230" rx="9" ry="8" fill="#b8c860"/>
<path d="M327 246 L346 240 L347 262 L330 264 Z" fill="#c59a80"/>
</g>
</svg></div>
  </div>
  <!-- taskbar -->

  <div class="a" style="left:0;top:815px;width:1515px;height:37px;background:#352519">
    <!-- weather -->
    <svg class="a" style="left:14px;top:10px" width="21" height="13" viewBox="0 0 21 13"><defs><linearGradient id="cl" x1="0" y1="0" x2="0" y2="1"><stop offset="0" stop-color="#b8d0f8"/><stop offset="1" stop-color="#e8eefa"/></linearGradient></defs><path d="M4 12.5Q0.5 12.5 0.5 9.5Q0.5 6.5 4 6.5Q4.5 1 10 1Q15 1 16 5.5Q20.5 5.8 20.5 9.2Q20.5 12.5 17 12.5Z" fill="url(#cl)"/></svg>
    <div class="t" style="left:40px;top:6px;font-size:9.5px;line-height:11px;color:#eee">-12°C</div>
    <div class="t" style="left:40px;top:19px;font-size:9.5px;line-height:11px;color:#ddd">Nuageux</div>
    <!-- start -->
    <svg class="a" style="left:469px;top:9px" width="19" height="19" viewBox="0 0 19 19"><g fill="#3ab8f4"><rect x="0" y="0" width="9" height="9"/><rect x="10" y="0" width="9" height="9"/><rect x="0" y="10" width="9" height="9"/><rect x="10" y="10" width="9" height="9"/></g></svg>
    <!-- search -->
    <div class="a" style="left:499px;top:6px;width:172px;height:24px;background:#f0eeec;border-radius:12px"></div>
    <svg class="a" style="left:507px;top:11px" width="12" height="13" viewBox="0 0 12 13"><circle cx="5.2" cy="5.2" r="4.2" fill="none" stroke="#333" stroke-width="1.4"/><path d="M8.2 8.5L11.3 12" stroke="#333" stroke-width="1.5"/></svg>
    <div class="t" style="left:527px;top:11px;font-size:10.5px;line-height:13px;color:#666">Rechercher</div>
    <svg class="a" style="left:630px;top:8px" width="40" height="20" viewBox="0 0 40 20"><defs><clipPath id="fc"><rect x="0" y="0" width="40" height="20" rx="10"/></clipPath></defs><g clip-path="url(#fc)"><rect width="40" height="20" fill="#dfe8e0"/><path d="M0 20L4 4L8 20ZM5 20L10 2L14 20ZM10 20L15 6L19 20ZM22 20L26 5L30 20ZM27 20L32 2L36 20ZM32 20L37 6L41 20Z" fill="#2f6a3a"/><path d="M16 20L20 10L24 20Z" fill="#c8a86a"/></g></svg>
    <!-- firefox active -->
    <div class="a" style="left:675px;top:2px;width:30px;height:32px;background:#3b2f28;border-radius:4px"></div>
    <svg class="a" style="left:681px;top:8px" width="19" height="19" viewBox="0 0 28 28"><defs><linearGradient id="ffot" x1="0.8" y1="0" x2="0.2" y2="1"><stop offset="0" stop-color="#ffe04a"/><stop offset="0.4" stop-color="#ff9a2a"/><stop offset="0.8" stop-color="#ff3d5e"/><stop offset="1" stop-color="#f2306e"/></linearGradient><radialGradient id="ffpt" cx="0.5" cy="0.6" r="0.6"><stop offset="0" stop-color="#5b4ff0"/><stop offset="1" stop-color="#9a3ad0"/></radialGradient></defs><path d="M4.5 5.5 L6.3 9 L8 6.3 L10 9.6 Q12 8.6 14.2 9 Q12.8 5 18.2 2.2 Q26.5 6.5 26.8 15 A12.8 12.8 0 1 1 1.8 12.5 Q2.5 8.5 4.5 5.5 Z" fill="url(#ffot)"/><circle cx="14" cy="16.3" r="6.2" fill="url(#ffpt)"/><path d="M7.8 10.5 Q13 8.2 16.5 12.5 Q12.5 12 10.5 15 Q9 12.5 7.8 10.5 Z" fill="#ff8a2a"/></svg>
    <div class="a" style="left:685px;top:31px;width:12px;height:3px;background:#7fc8f4;border-radius:2px"></div>
    <!-- chrome -->
    <svg class="a" style="left:716px;top:9px" width="19" height="19" viewBox="0 0 19 19"><circle cx="9.5" cy="9.5" r="9" fill="#db4437"/><path d="M9.5 9.5L1.7 5Q-0.5 9.5 1.5 13.5Q4 18.2 9.5 18.5Z" fill="#0f9d58"/><path d="M9.5 9.5L9.5 18.5Q15 18.5 17.5 13.5Q19.5 9 17.3 5Z" fill="#ffcd40"/><path d="M9.5 9.5L17.3 5Q14.8 0.5 9.5 0.5L5 7Z" fill="#db4437"/><circle cx="9.5" cy="9.5" r="4.3" fill="#fff"/><circle cx="9.5" cy="9.5" r="3.3" fill="#4285f4"/></svg>
    <!-- Au -->
    <div class="a" style="left:751px;top:9px;width:17px;height:17px;background:#00005b;border-radius:3px"></div>
    <div class="t" style="left:751px;top:11px;width:17px;text-align:center;font-size:10px;line-height:13px;color:#9999ff;font-weight:bold">Au</div>
    <div class="a" style="left:757px;top:32px;width:5px;height:2px;background:#aaa;border-radius:1px"></div>
    <!-- folder -->
    <svg class="a" style="left:785px;top:9px" width="20" height="17" viewBox="0 0 20 17"><path d="M0 1.5Q0 0.5 1 0.5H7L9 2.5H19Q20 2.5 20 3.5V16H0Z" fill="#e8b830"/><rect x="0" y="5" width="20" height="11.5" fill="#ffd75e"/><rect x="5" y="10" width="10" height="6.5" fill="#2a8ad8"/></svg>
    <div class="a" style="left:792px;top:32px;width:5px;height:2px;background:#aaa;border-radius:1px"></div>
    <!-- headphones -->
    <svg class="a" style="left:820px;top:8px" width="20" height="19" viewBox="0 0 20 19"><path d="M2.5 13V9Q2.5 1.5 10 1.5Q17.5 1.5 17.5 9V13" fill="none" stroke="#2030c8" stroke-width="2.6"/><rect x="0.5" y="10" width="4" height="7" rx="1.5" fill="#2030c8"/><rect x="15.5" y="10" width="4" height="7" rx="1.5" fill="#2030c8"/><ellipse cx="10" cy="12" rx="5" ry="5" fill="#f0a020"/><rect x="5" y="11" width="10" height="2.5" fill="#e02020"/></svg>
    <!-- ocenaudio -->
    <svg class="a" style="left:857px;top:9px" width="14" height="17" viewBox="0 0 14 17"><path d="M3 6Q3 1 7 1Q11 1 11 6" fill="none" stroke="#d89a20" stroke-width="1.5"/><ellipse cx="7" cy="10" rx="4.5" ry="5" fill="#e8a830"/><path d="M4 11Q7 15 10 11" fill="none" stroke="#222" stroke-width="1.2"/></svg>
    <!-- notepad -->
    <svg class="a" style="left:892px;top:8px" width="15" height="19" viewBox="0 0 15 19"><rect x="0.5" y="1.5" width="14" height="17" rx="1" fill="#42b4e6"/><rect x="0.5" y="15.5" width="14" height="3" fill="#e8e0d0"/><path d="M3 6H12M3 9H12M3 12H12" stroke="#1a5a8a" stroke-width="1"/><path d="M2 0.5V3M5 0.5V3M8 0.5V3M11 0.5V3" stroke="#888" stroke-width="1"/></svg>
    <!-- copilot -->
    <svg class="a" style="left:924px;top:9px" width="19" height="18" viewBox="0 0 19 18"><path d="M5 0.5H13Q15 0.5 14 3L10 17.5H3Q1 17.5 2 15Z" fill="#3f8cf2"/><path d="M7 0.5H15Q18 0.5 17 4L13.5 17.5H5Z" fill="#e25fa0" opacity="0.9"/><path d="M1 9Q0 17.5 4 17.5H11L12.5 11Z" fill="#f3a43b" opacity="0.9"/><path d="M11 0.5H15Q18 0.5 17 4L15.5 9L12 3Z" fill="#8f5ee8"/></svg>
    <!-- paint -->
    <svg class="a" style="left:960px;top:9px" width="18" height="18" viewBox="0 0 18 18"><path d="M9 1Q17 1 17 8Q17 11 14 11Q11 11 12 14Q12.5 17 9 17Q1 17 1 9Q1 1 9 1Z" fill="#4aa8e8"/><circle cx="5" cy="7" r="1.6" fill="#f04040"/><circle cx="8" cy="4" r="1.6" fill="#f0c020"/><circle cx="12" cy="4.5" r="1.6" fill="#40c040"/><path d="M11 17L16 6" stroke="#c8a060" stroke-width="2"/></svg>
    <div class="a" style="left:967px;top:32px;width:5px;height:2px;background:#aaa;border-radius:1px"></div>
    <!-- infinity -->
    <div class="a" style="left:994px;top:8px;width:19px;height:19px;background:#1a8cf0;border-radius:4px"></div>
    <svg class="a" style="left:996px;top:13px" width="15" height="9" viewBox="0 0 15 9"><path d="M7.5 4.5Q5 0.8 3 0.8Q0.8 0.8 0.8 4.5Q0.8 8.2 3 8.2Q5 8.2 7.5 4.5Q10 0.8 12 0.8Q14.2 0.8 14.2 4.5Q14.2 8.2 12 8.2Q10 8.2 7.5 4.5Z" fill="none" stroke="#fff" stroke-width="1.6"/></svg>
    <!-- writer -->
    <svg class="a" style="left:1030px;top:8px" width="16" height="19" viewBox="0 0 16 19"><path d="M0.5 0.5H11.5L15.5 4.5V18.5H0.5Z" fill="#2a7ad0"/><path d="M11.5 0.5V4.5H15.5Z" fill="#8ac0f0"/><path d="M3 10H7M3 12.5H12M3 15H10M9 7H12" stroke="#fff" stroke-width="1.2"/></svg>
    <div class="a" style="left:1035px;top:32px;width:5px;height:2px;background:#aaa;border-radius:1px"></div>
    <!-- tray -->
    <svg class="a" style="left:1357px;top:14px" width="11" height="7" viewBox="0 0 11 7"><path d="M0.8 6L5.5 1.2L10.2 6" fill="none" stroke="#eee" stroke-width="1.3"/></svg>
    <svg class="a" style="left:1381px;top:12px" width="14" height="14" viewBox="0 0 14 14"><path d="M3 1L5.5 2.5L3 4L0.5 2.5ZM8.5 1L11 2.5L8.5 4L6 2.5ZM3 4L5.5 5.5L3 7L0.5 5.5ZM8.5 4L11 5.5L8.5 7L6 5.5Z" fill="#eee"/><rect x="0.5" y="6" width="7" height="7.5" fill="#d01030"/><text x="4" y="12" font-size="6" fill="#fff" text-anchor="middle" font-family="Liberation Sans">2</text></svg>
    <svg class="a" style="left:1406px;top:12px" width="14" height="11" viewBox="0 0 14 11"><path d="M0.8 4Q7 -1.5 13.2 4M2.8 6Q7 2.5 11.2 6M4.8 8Q7 6.3 9.2 8" fill="none" stroke="#eee" stroke-width="1.2"/><circle cx="7" cy="9.8" r="1" fill="#eee"/></svg>
    <svg class="a" style="left:1425px;top:12px" width="12" height="11" viewBox="0 0 12 11"><path d="M0.6 3.5H3L6 0.8V10.2L3 7.5H0.6Z" fill="none" stroke="#eee" stroke-width="1"/><path d="M8 3.5Q9 5.5 8 7.5M9.8 2Q11.5 5.5 9.8 9" fill="none" stroke="#eee" stroke-width="1"/></svg>
    <div class="t" style="left:1440px;top:7px;width:61px;text-align:right;font-size:9.6px;line-height:11px;color:#eee">11:45</div>
    <div class="t" style="left:1440px;top:19px;width:61px;text-align:right;font-size:9.6px;line-height:11px;color:#eee">2026-03-26</div>
  </div>
</div>
</body></html>
